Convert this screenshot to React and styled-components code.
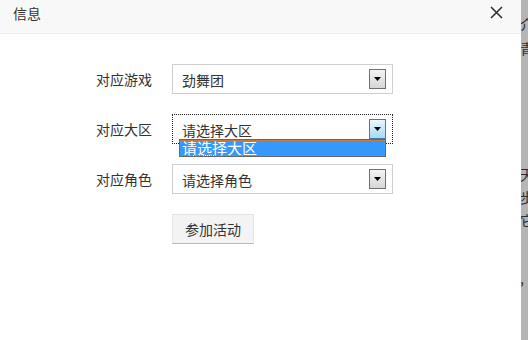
import React from "react";
import styled, { createGlobalStyle } from "styled-components";

const Global = createGlobalStyle`
  html, body { margin: 0; padding: 0; background: #fff; }
  body { font-family: "Noto Sans CJK SC", "Noto Sans", sans-serif; }
  * { box-sizing: border-box; }
`;

const Page = styled.div`
  display: flex;
  width: 528px;
  height: 340px;
  overflow: hidden;
`;

const Dialog = styled.div`
  width: 521px;
  flex: none;
  display: flex;
  flex-direction: column;
  background: #fff;
`;

const Header = styled.div`
  height: 34px;
  flex: none;
  display: flex;
  align-items: center;
  justify-content: space-between;
  padding: 0 18px 0 13px;
  background: #f8f8f8;
  border-bottom: 1px solid #ececec;
`;

const Title = styled.span`
  font-size: 14px;
  color: #333;
  line-height: 1;
  margin-top: -7px;
`;

const Close = styled.span`
  display: flex;
  margin-top: -8px;
`;

const Body = styled.div`
  padding: 30px 0 0 96px;
  display: grid;
  grid-template-columns: 76px 221px;
  grid-auto-rows: 30px;
  row-gap: 20px;
  align-items: center;
`;

const Label = styled.span`
  font-size: 14px;
  color: #333;
  line-height: 1;
  margin-top: -1px;
`;

const Select = styled.div`
  position: relative;
  height: 30px;
  display: flex;
  align-items: center;
  justify-content: space-between;
  padding: 2px 6px 0 9px;
  border: 1px ${(p) => (p.$focused ? "dotted #222" : "solid #cfcfcf")};
  background: #fff;
  font-size: 14px;
  color: #333;
`;

const ArrowBox = styled.span`
  width: 17px;
  height: 20px;
  margin-top: -2px;
  display: flex;
  align-items: center;
  justify-content: center;
  border: 1px solid ${(p) => (p.$hover ? "#3c7fb1" : "#707070")};
  background: ${(p) =>
    p.$hover
      ? "linear-gradient(#eaf6fd, #a7d9f5)"
      : "linear-gradient(#f4f4f4, #d6d6d6)"};
`;

const Dropdown = styled.div`
  position: absolute;
  left: 6px;
  top: 24px;
  width: 207px;
  height: 18px;
  border: 1px solid #666;
  background: #3399ff;
  z-index: 2;
`;

const Option = styled.div`
  height: 100%;
  outline: 1px dotted #d0803a;
  outline-offset: -1px;
  color: #fff;
  font-size: 15px;
  line-height: 16px;
  padding-left: 2px;
`;

const Button = styled.button`
  grid-column: 2;
  justify-self: start;
  width: 82px;
  height: 30px;
  font-family: inherit;
  font-size: 14px;
  color: #333;
  background: #f3f3f3;
  border: 1px solid #e4e4e4;
  border-bottom-color: #b9b9b9;
  padding: 0;
`;

const Shade = styled.div`
  flex: 1;
  background: #b5b5b5;
  overflow: hidden;
  display: flex;
  flex-direction: column;
  font-size: 14px;
  color: #2a2a3a;
  line-height: 14px;
  white-space: nowrap;
`;

const Frag = styled.span`
  margin-top: ${(p) => p.$gap}px;
  margin-left: -1px;
`;

const Arrow = () => (
  <svg width="7" height="4" viewBox="0 0 7 4">
    <path d="M0 0h7L3.5 4z" fill="#000" />
  </svg>
);

export default function App() {
  return (
    <>
      <Global />
      <Page>
        <Dialog>
          <Header>
            <Title>信息</Title>
            <Close>
              <svg width="13" height="13" viewBox="0 0 13 13">
                <path
                  d="M1 1L12 12M12 1L1 12"
                  stroke="#2b2b33"
                  strokeWidth="1.5"
                />
              </svg>
            </Close>
          </Header>
          <Body>
            <Label>对应游戏</Label>
            <Select>
              <span>劲舞团</span>
              <ArrowBox>
                <Arrow />
              </ArrowBox>
            </Select>
            <Label>对应大区</Label>
            <Select $focused>
              <span>请选择大区</span>
              <ArrowBox $hover>
                <Arrow />
              </ArrowBox>
              <Dropdown>
                <Option>请选择大区</Option>
              </Dropdown>
            </Select>
            <Label>对应角色</Label>
            <Select>
              <span>请选择角色</span>
              <ArrowBox>
                <Arrow />
              </ArrowBox>
            </Select>
            <Button>参加活动</Button>
          </Body>
        </Dialog>
        <Shade>
          <Frag $gap={17}>介</Frag>
          <Frag $gap={10}>青</Frag>
          <Frag $gap={112}>天</Frag>
          <Frag $gap={9}>步</Frag>
          <Frag $gap={9}>它</Frag>
          <Frag $gap={44}>,</Frag>
        </Shade>
      </Page>
    </>
  );
}
